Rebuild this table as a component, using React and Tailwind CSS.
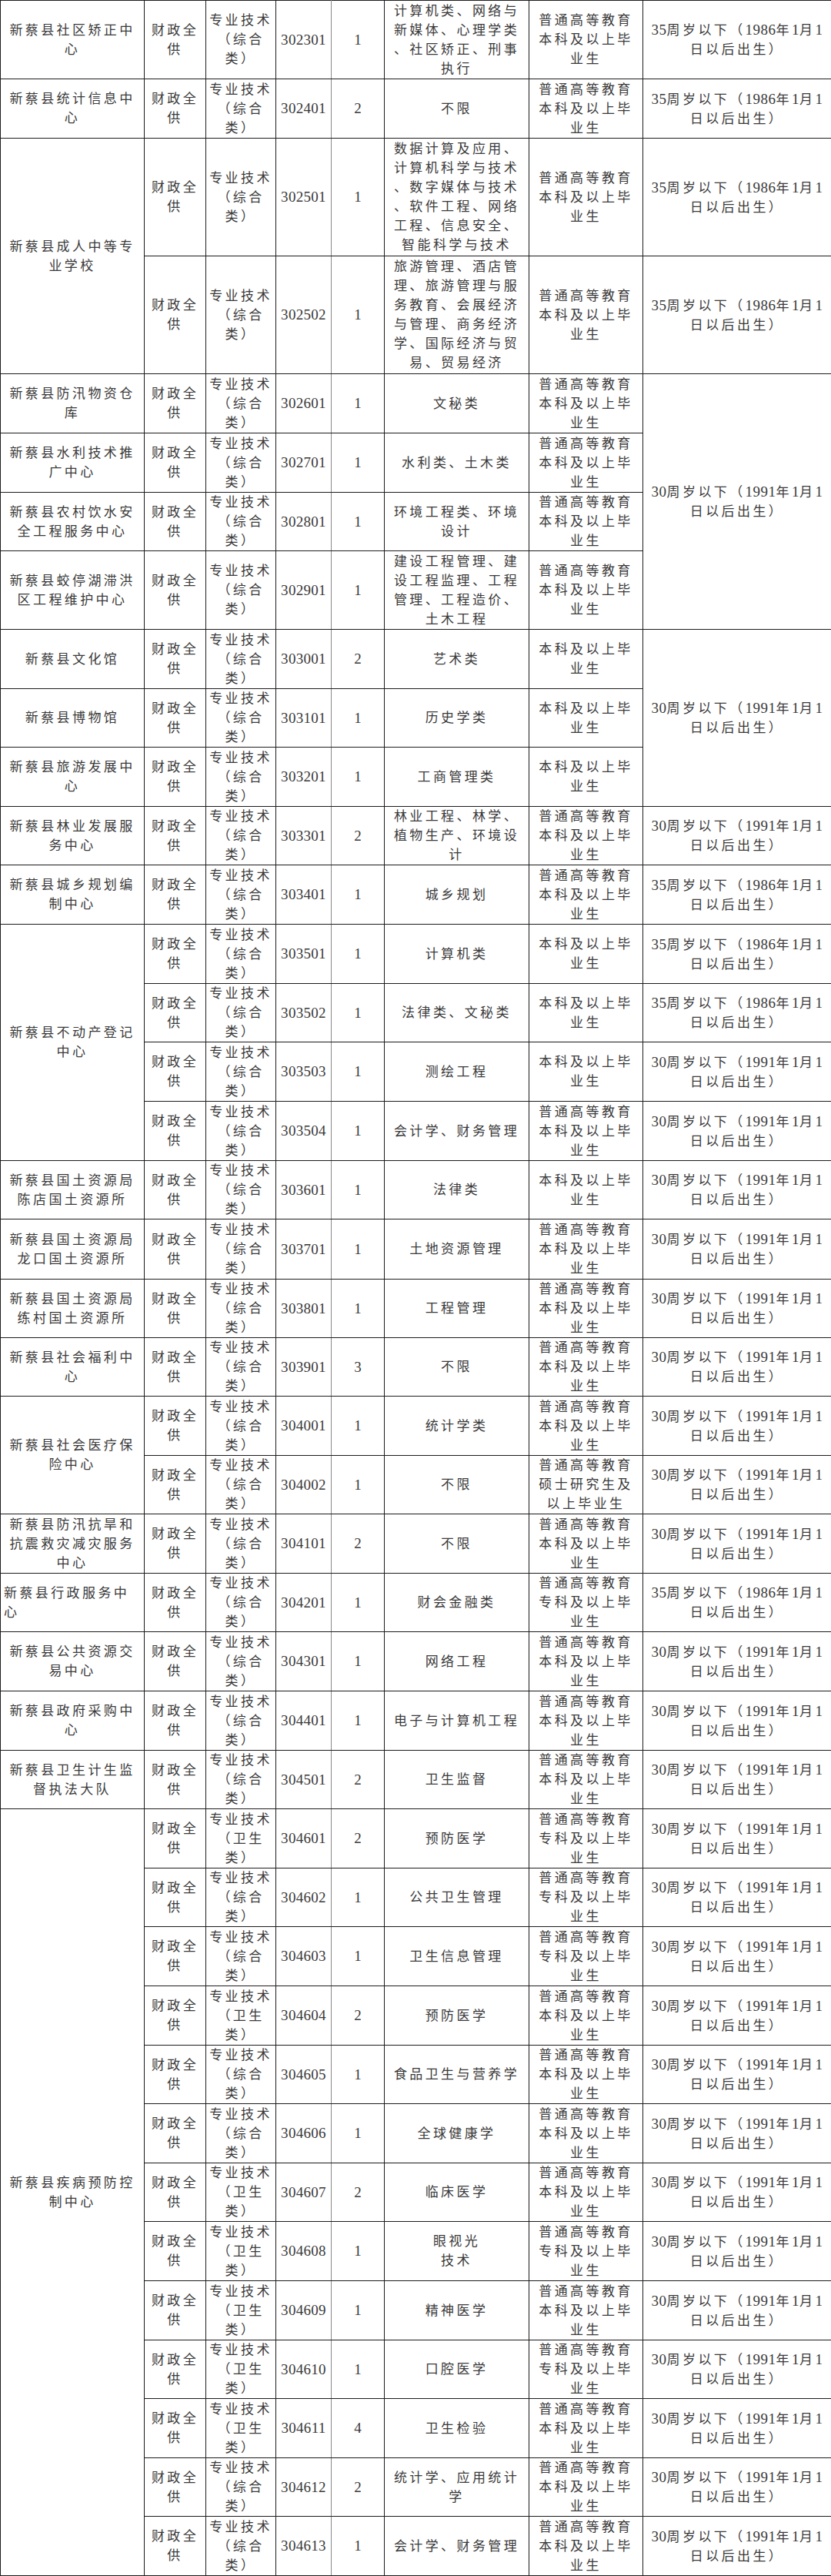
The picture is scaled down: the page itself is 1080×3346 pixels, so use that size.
import React from 'react';

const EDU = {
	A: ['普通高等教育', '本科及以上毕', '业生'],
	B: ['本科及以上毕', '业生'],
	C: ['普通高等教育', '专科及以上毕', '业生'],
	D: ['普通高等教育', '硕士研究生及', '以上毕业生'],
};

const AGE = {
	35: ['35周岁以下（1986年1月1', '日以后出生）'],
	30: ['30周岁以下（1991年1月1', '日以后出生）'],
};

const HEIGHT = {
	76: 'h-[76px]',
	77: 'h-[77px]',
	78: 'h-[78px]',
	102: 'h-[102px]',
	153: 'h-[153px]',
};

// org: lines | null (covered by rowspan above); age: key | null
const rows = [
	{ h: 102, org: ['新蔡县社区矫正中', '心'], code: '302301', n: '1', kind: '综合', major: ['计算机类、网络与', '新媒体、心理学类', '、社区矫正、刑事', '执行'], edu: 'A', age: 35 },
	{ h: 77, org: ['新蔡县统计信息中', '心'], code: '302401', n: '2', kind: '综合', major: ['不限'], edu: 'A', age: 35 },
	{ h: 153, org: ['新蔡县成人中等专', '业学校'], orgSpan: 2, code: '302501', n: '1', kind: '综合', major: ['数据计算及应用、', '计算机科学与技术', '、数字媒体与技术', '、软件工程、网络', '工程、信息安全、', '智能科学与技术'], edu: 'A', age: 35 },
	{ h: 153, org: null, code: '302502', n: '1', kind: '综合', major: ['旅游管理、酒店管', '理、旅游管理与服', '务教育、会展经济', '与管理、商务经济', '学、国际经济与贸', '易、贸易经济'], edu: 'A', age: 35 },
	{ h: 77, org: ['新蔡县防汛物资仓', '库'], code: '302601', n: '1', kind: '综合', major: ['文秘类'], edu: 'A', age: 30, ageSpan: 4 },
	{ h: 77, org: ['新蔡县水利技术推', '广中心'], code: '302701', n: '1', kind: '综合', major: ['水利类、土木类'], edu: 'A', age: null },
	{ h: 76, org: ['新蔡县农村饮水安', '全工程服务中心'], code: '302801', n: '1', kind: '综合', major: ['环境工程类、环境', '设计'], edu: 'A', age: null },
	{ h: 102, org: ['新蔡县蛟停湖滞洪', '区工程维护中心'], code: '302901', n: '1', kind: '综合', major: ['建设工程管理、建', '设工程监理、工程', '管理、工程造价、', '土木工程'], edu: 'A', age: null },
	{ h: 77, org: ['新蔡县文化馆'], code: '303001', n: '2', kind: '综合', major: ['艺术类'], edu: 'B', age: 30, ageSpan: 3 },
	{ h: 76, org: ['新蔡县博物馆'], code: '303101', n: '1', kind: '综合', major: ['历史学类'], edu: 'B', age: null },
	{ h: 77, org: ['新蔡县旅游发展中', '心'], code: '303201', n: '1', kind: '综合', major: ['工商管理类'], edu: 'B', age: null },
	{ h: 76, org: ['新蔡县林业发展服', '务中心'], code: '303301', n: '2', kind: '综合', major: ['林业工程、林学、', '植物生产、环境设', '计'], edu: 'A', age: 30 },
	{ h: 77, org: ['新蔡县城乡规划编', '制中心'], code: '303401', n: '1', kind: '综合', major: ['城乡规划'], edu: 'A', age: 35 },
	{ h: 77, org: ['新蔡县不动产登记', '中心'], orgSpan: 4, code: '303501', n: '1', kind: '综合', major: ['计算机类'], edu: 'B', age: 35 },
	{ h: 76, org: null, code: '303502', n: '1', kind: '综合', major: ['法律类、文秘类'], edu: 'B', age: 35 },
	{ h: 77, org: null, code: '303503', n: '1', kind: '综合', major: ['测绘工程'], edu: 'B', age: 30 },
	{ h: 77, org: null, code: '303504', n: '1', kind: '综合', major: ['会计学、财务管理'], edu: 'A', age: 30 },
	{ h: 76, org: ['新蔡县国土资源局', '陈店国土资源所'], code: '303601', n: '1', kind: '综合', major: ['法律类'], edu: 'B', age: 30 },
	{ h: 78, org: ['新蔡县国土资源局', '龙口国土资源所'], code: '303701', n: '1', kind: '综合', major: ['土地资源管理'], edu: 'A', age: 30 },
	{ h: 76, org: ['新蔡县国土资源局', '练村国土资源所'], code: '303801', n: '1', kind: '综合', major: ['工程管理'], edu: 'A', age: 30 },
	{ h: 76, org: ['新蔡县社会福利中', '心'], code: '303901', n: '3', kind: '综合', major: ['不限'], edu: 'A', age: 30 },
	{ h: 77, org: ['新蔡县社会医疗保', '险中心'], orgSpan: 2, code: '304001', n: '1', kind: '综合', major: ['统计学类'], edu: 'A', age: 30 },
	{ h: 76, org: null, code: '304002', n: '1', kind: '综合', major: ['不限'], edu: 'D', age: 30 },
	{ h: 77, org: ['新蔡县防汛抗旱和', '抗震救灾减灾服务', '中心'], code: '304101', n: '2', kind: '综合', major: ['不限'], edu: 'A', age: 30 },
	{ h: 76, org: ['新蔡县行政服务中', '心'], orgLeft: true, code: '304201', n: '1', kind: '综合', major: ['财会金融类'], edu: 'C', age: 35 },
	{ h: 77, org: ['新蔡县公共资源交', '易中心'], code: '304301', n: '1', kind: '综合', major: ['网络工程'], edu: 'A', age: 30 },
	{ h: 77, org: ['新蔡县政府采购中', '心'], code: '304401', n: '1', kind: '综合', major: ['电子与计算机工程'], edu: 'A', age: 30 },
	{ h: 76, org: ['新蔡县卫生计生监', '督执法大队'], code: '304501', n: '2', kind: '综合', major: ['卫生监督'], edu: 'A', age: 30 },
	{ h: 77, org: ['新蔡县疾病预防控', '制中心'], orgSpan: 13, code: '304601', n: '2', kind: '卫生', major: ['预防医学'], edu: 'C', age: 30 },
	{ h: 76, org: null, code: '304602', n: '1', kind: '综合', major: ['公共卫生管理'], edu: 'C', age: 30 },
	{ h: 77, org: null, code: '304603', n: '1', kind: '综合', major: ['卫生信息管理'], edu: 'C', age: 30 },
	{ h: 77, org: null, code: '304604', n: '2', kind: '卫生', major: ['预防医学'], edu: 'A', age: 30 },
	{ h: 76, org: null, code: '304605', n: '1', kind: '综合', major: ['食品卫生与营养学'], edu: 'A', age: 30 },
	{ h: 77, org: null, code: '304606', n: '1', kind: '综合', major: ['全球健康学'], edu: 'A', age: 30 },
	{ h: 76, org: null, code: '304607', n: '2', kind: '卫生', major: ['临床医学'], edu: 'A', age: 30 },
	{ h: 77, org: null, code: '304608', n: '1', kind: '卫生', major: ['眼视光', '技术'], edu: 'C', age: 30 },
	{ h: 77, org: null, code: '304609', n: '1', kind: '卫生', major: ['精神医学'], edu: 'A', age: 30 },
	{ h: 76, org: null, code: '304610', n: '1', kind: '卫生', major: ['口腔医学'], edu: 'C', age: 30 },
	{ h: 77, org: null, code: '304611', n: '4', kind: '卫生', major: ['卫生检验'], edu: 'A', age: 30 },
	{ h: 76, org: null, code: '304612', n: '2', kind: '综合', major: ['统计学、应用统计', '学'], edu: 'A', age: 30 },
	{ h: 77, org: null, code: '304613', n: '1', kind: '综合', major: ['会计学、财务管理'], edu: 'A', age: 30 },
];

function Run({ text }) {
	return text
		.split(/(\d+)/)
		.filter(Boolean)
		.map((part, i) =>
			/\d/.test(part) ? (
				<span key={i} className="text-[19px] tracking-[0.5px]">
					{part}
				</span>
			) : (
				<span key={i} className="text-[17px] tracking-[3.4px]">
					{part}
				</span>
			)
		);
}

function Lines({ lines }) {
	return lines.map((l, i) => (
		<div key={i} className="whitespace-nowrap">
			<Run text={l} />
		</div>
	));
}

const cell = 'border border-[#1c1c1c] p-0 align-middle text-center';

export default function App() {
	return (
		<div className="w-[1080px] bg-white text-[#3a3a3a] font-['Liberation_Serif','Noto_Sans_CJK_SC',serif] text-[17px] leading-[25px]">
			<table className="w-[1080px] table-fixed border-collapse border-t border-l border-t-[#9a9a9a] border-l-[#9a9a9a]">
				<colgroup>
					<col className="w-[187px]" />
					<col className="w-[80px]" />
					<col className="w-[91px]" />
					<col className="w-[72px]" />
					<col className="w-[69px]" />
					<col className="w-[188px]" />
					<col className="w-[148px]" />
					<col className="w-[245px]" />
				</colgroup>
				<tbody>
					{rows.map((r) => (
						<tr key={r.code} className={HEIGHT[r.h]}>
							{r.org && (
								<td
									rowSpan={r.orgSpan || 1}
									className={r.orgLeft ? cell + ' !text-left pl-[4px]' : cell}
								>
									<Lines lines={r.org} />
								</td>
							)}
							<td className={cell}>
								<Lines lines={['财政全', '供']} />
							</td>
							<td className={cell}>
								<Lines lines={['专业技术', '（' + r.kind, '类）']} />
							</td>
							<td className={cell + ' border-r-[#8a8a8a]'}>
								<span className="text-[19px] tracking-[0.3px]">{r.code}</span>
							</td>
							<td className={cell}>
								<span className="text-[19px]">{r.n}</span>
							</td>
							<td className={cell}>
								<Lines lines={r.major} />
							</td>
							<td className={cell}>
								<Lines lines={EDU[r.edu]} />
							</td>
							{r.age && (
								<td rowSpan={r.ageSpan || 1} className={cell}>
									<Lines lines={AGE[r.age]} />
								</td>
							)}
						</tr>
					))}
				</tbody>
			</table>
		</div>
	);
}
